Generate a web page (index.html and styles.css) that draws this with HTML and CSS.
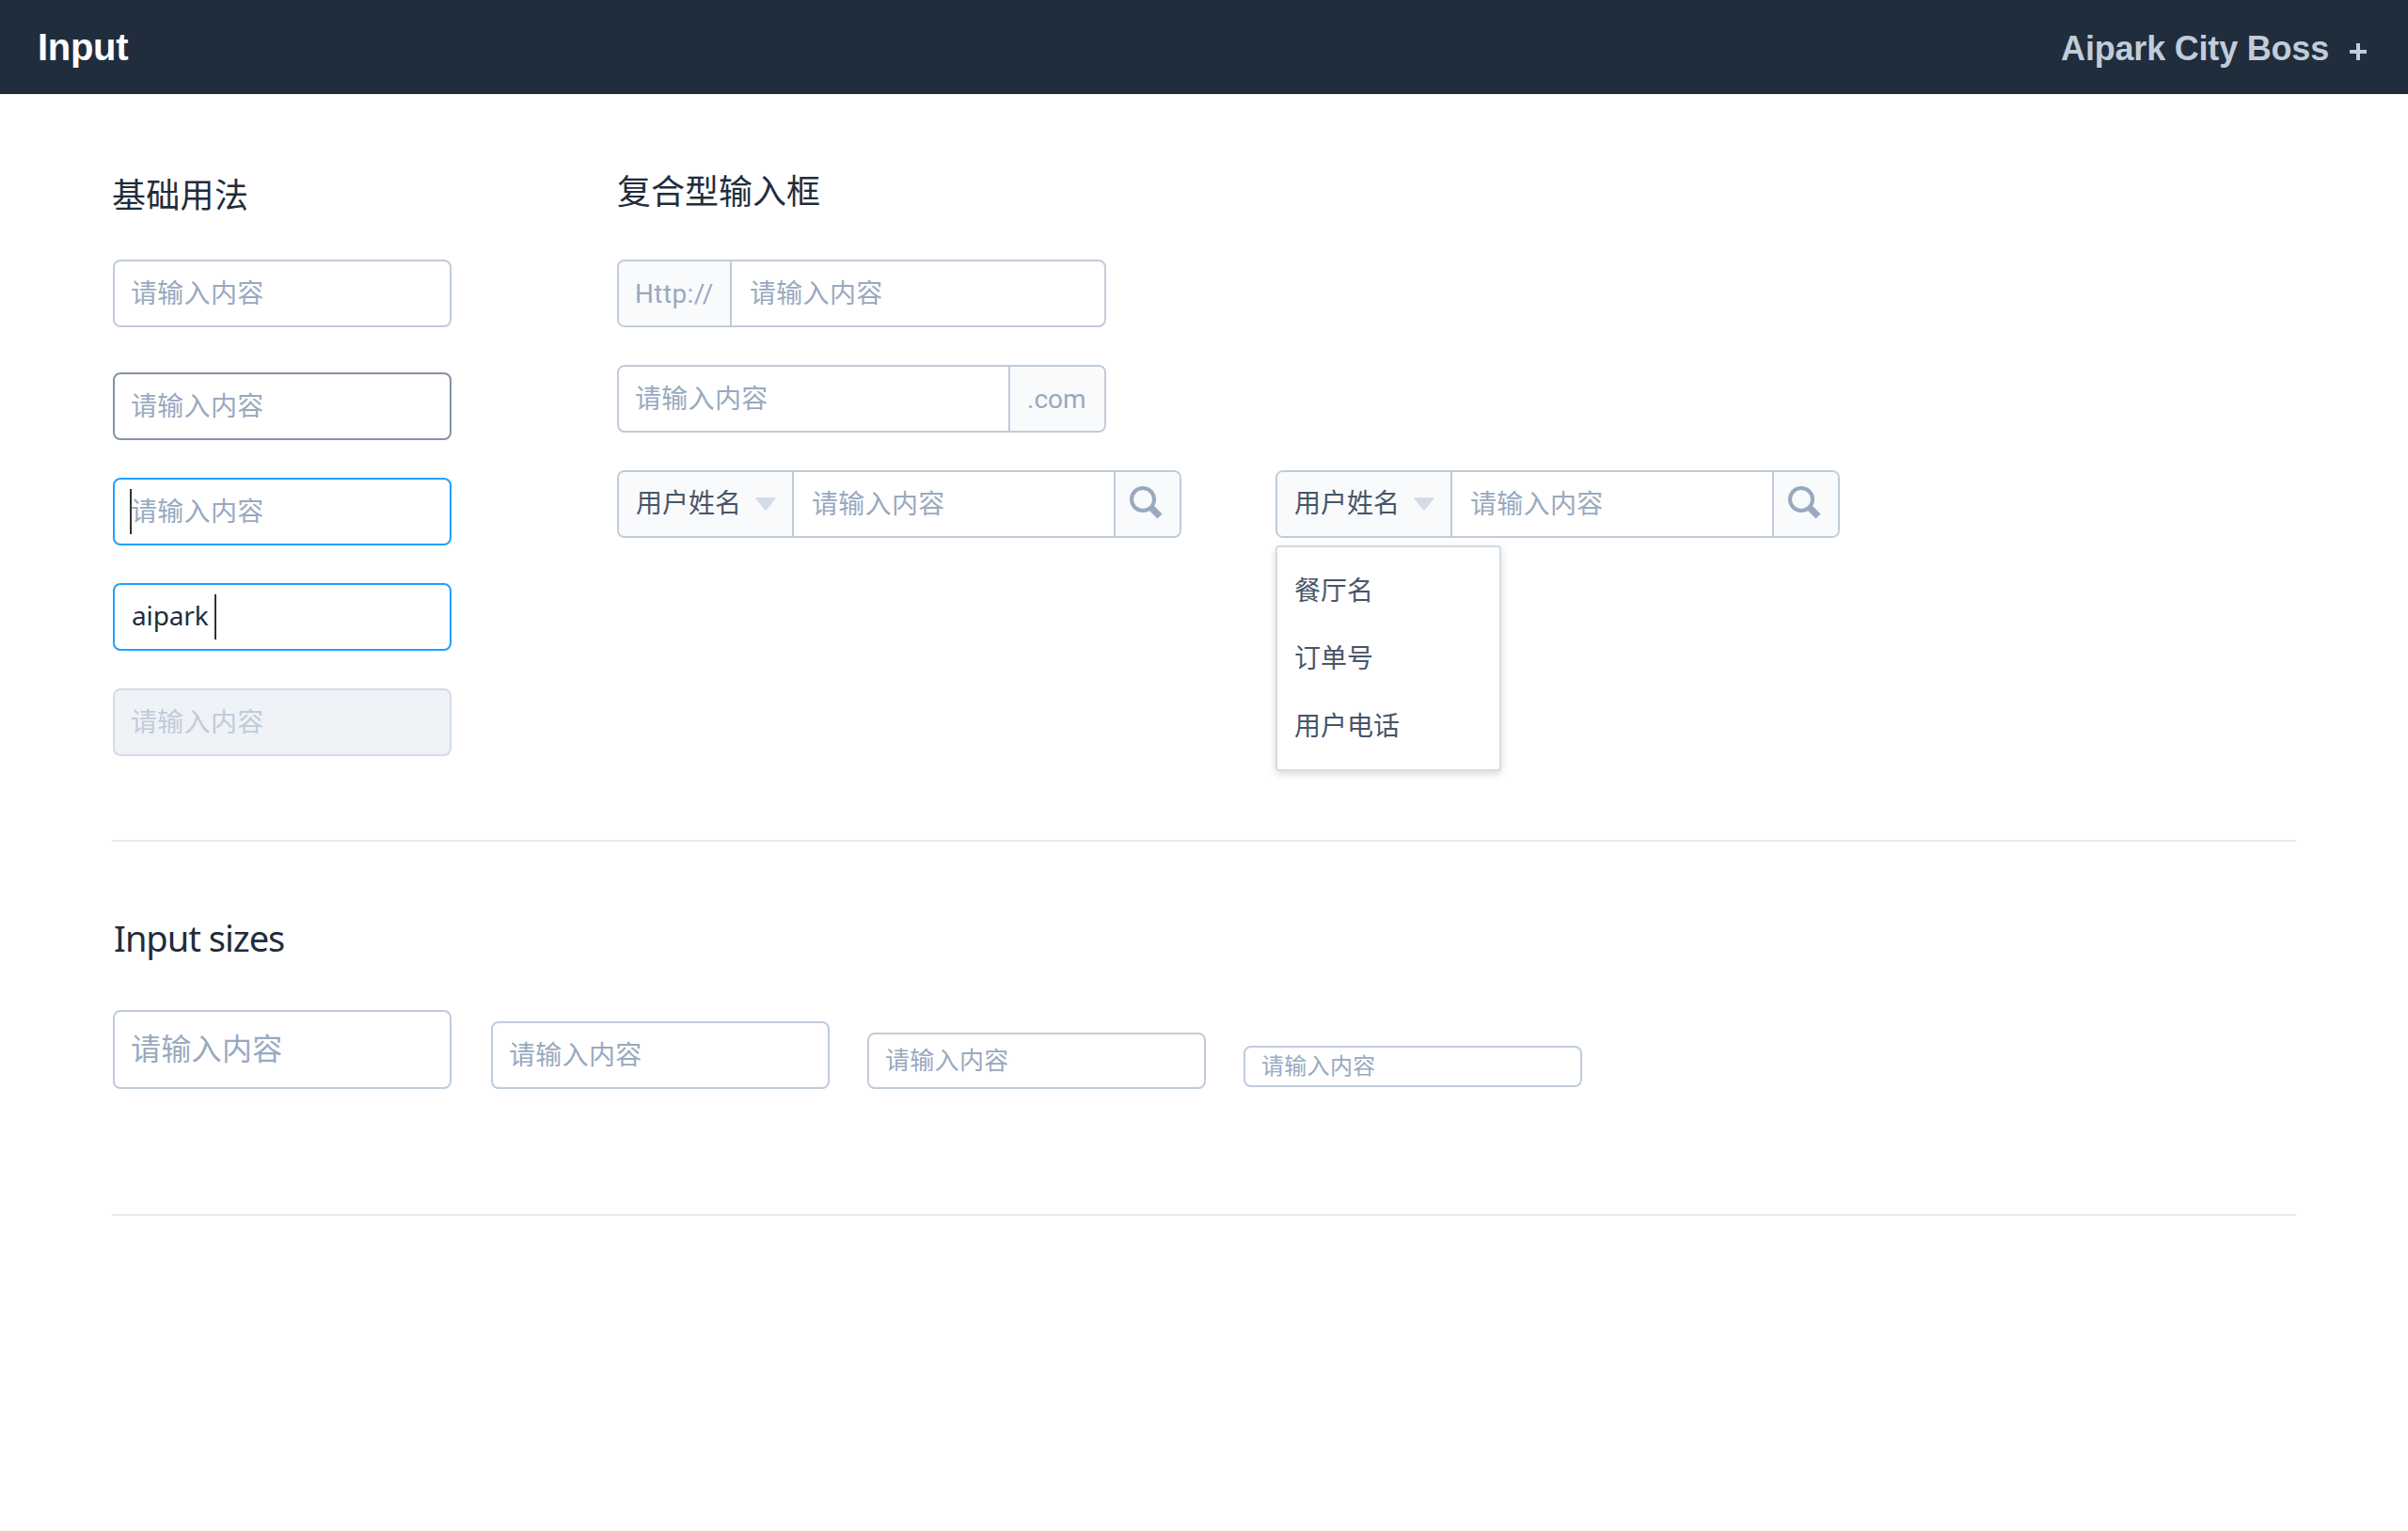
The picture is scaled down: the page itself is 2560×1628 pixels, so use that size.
FILE: index.html
```html
<!DOCTYPE html>
<html lang="zh-CN">
<head>
<meta charset="utf-8">
<title>Input</title>
<link rel="stylesheet" href="styles.css">
</head>
<body>
<header class="topbar">
  <h1 class="topbar-title">Input</h1>
  <div class="topbar-brand"><span>Aipark City Boss</span>
    <svg class="plus" viewBox="0 0 18 18"><path d="M9 0V18M0 9H18"/></svg>
  </div>
</header>
<main class="page">
  <section class="section usage">
    <div class="basic">
      <h2 class="heading">基础用法</h2>
      <div class="input first"><span>请输入内容</span></div>
      <div class="input hover"><span>请输入内容</span></div>
      <div class="input focus"><i class="caret caret-start"></i><span>请输入内容</span></div>
      <div class="input focus filled"><span>aipark</span><i class="caret"></i></div>
      <div class="input disabled"><span>请输入内容</span></div>
    </div>
    <div class="compound">
      <h2 class="heading raised">复合型输入框</h2>
      <div class="group short">
        <div class="addon prefix">Http://</div>
        <div class="field"><span>请输入内容</span></div>
      </div>
      <div class="group short">
        <div class="field flush"><span>请输入内容</span></div>
        <div class="addon suffix">.com</div>
      </div>
      <div class="searches">
        <div class="group">
          <div class="select"><span>用户姓名</span><svg class="arrow" viewBox="0 0 22 14"><path d="M1.5 0H20.5Q22.500 0.300 21 2L12.500 12.500Q11 14.500 9.500 12.500L1 2Q-0.500 0.300 1.500 0Z"/></svg></div>
          <div class="field"><span>请输入内容</span></div>
          <div class="search"><svg class="glass" viewBox="0 0 36 36"><circle cx="14" cy="14" r="12"/><path d="M22 22L32 32"/></svg></div>
        </div>
        <div class="group">
          <div class="select"><span>用户姓名</span><svg class="arrow" viewBox="0 0 22 14"><path d="M1.5 0H20.5Q22.500 0.300 21 2L12.500 12.500Q11 14.500 9.500 12.500L1 2Q-0.500 0.300 1.500 0Z"/></svg></div>
          <div class="field"><span>请输入内容</span></div>
          <div class="search"><svg class="glass" viewBox="0 0 36 36"><circle cx="14" cy="14" r="12"/><path d="M22 22L32 32"/></svg></div>
          <ul class="menu">
            <li>餐厅名</li>
            <li>订单号</li>
            <li>用户电话</li>
          </ul>
        </div>
      </div>
    </div>
  </section>
  <section class="section sizes">
    <h2 class="heading latin">Input sizes</h2>
    <div class="size-row">
      <div class="input large"><span>请输入内容</span></div>
      <div class="input medium"><span>请输入内容</span></div>
      <div class="input small"><span>请输入内容</span></div>
      <div class="input mini"><span>请输入内容</span></div>
    </div>
  </section>
</main>
</body>
</html>
```
FILE: styles.css
```css
* { box-sizing: border-box; }
body {
  margin: 0;
  background: #fff;
  color: #1f2d3d;
  font-family: "Noto Sans CJK SC", sans-serif;
  font-size: 28px;
  font-weight: 400;
}
h1, h2, ul { margin: 0; padding: 0; list-style: none; }
svg { display: block; flex: none; }

.topbar {
  display: flex;
  justify-content: space-between;
  align-items: center;
  height: 100px;
  padding: 0 44px 0 40px;
  background: #1f2d3d;
  font-family: "Liberation Sans", Arial, sans-serif;
  font-weight: 700;
}
.topbar-title { font-size: 40px; line-height: 46px; color: #fff; letter-spacing: -0.3px; }
.topbar-brand {
  display: flex;
  align-items: center;
  gap: 22px;
  font-size: 36px;
  line-height: 42px;
  letter-spacing: -0.2px;
  padding-top: 4px;
  color: #c0ccda;
}
.plus { width: 18px; height: 18px; margin-top: 6px; }
.plus path { stroke: #c0ccda; stroke-width: 4; fill: none; }

.page { margin: 0 119px; }
.section { border-bottom: 2px solid #e5e9f2; padding: 0 1px; }
.usage { display: flex; gap: 176px; height: 795px; padding-top: 79px; }
.heading { font-size: 36px; line-height: 52px; font-weight: 400; height: 52px; }
.basic .heading { text-indent: -1px; letter-spacing: 0.3px; }
.heading.raised { position: relative; top: -4px; }

.basic { width: 360px; }
.input {
  display: flex;
  align-items: center;
  width: 360px;
  height: 72px;
  margin-top: 40px;
  padding: 0 17px;
  border: 2px solid #c0ccda;
  border-radius: 8px;
  color: #99a9bf;
  line-height: 40px;
  letter-spacing: 0.3px;
}
.input span { margin-top: -4px; }
.basic .input.first { margin-top: 45px; }
.basic .input.hover { margin-top: 48px; border-color: #8492a6; }
.input.focus { border-color: #20a0ff; }
.input.filled { padding-left: 18px; color: #1f2d3d; font-family: "Noto Sans", sans-serif; letter-spacing: -0.15px; }
.input.disabled { background: #eff2f7; border-color: #d3dce6; color: #c0ccda; }
.caret { width: 2px; height: 48px; background: #333; margin-left: 7px; }
.caret-start { margin: 0 -1px 0 -1px; }

.compound { width: 1300px; }
.group {
  position: relative;
  display: flex;
  width: 600px;
  height: 72px;
  margin-top: 40px;
  border: 2px solid #c0ccda;
  border-radius: 8px;
  line-height: 64px;
}
.heading + .group { margin-top: 45px; }
.group.short { width: 520px; }
.searches { display: flex; gap: 100px; }
.addon {
  background: #f9fafc;
  color: #99a9bf;
  font-family: Roboto, sans-serif;
  line-height: 69px;
  border-radius: 6px 0 0 6px;
}
.prefix { width: 120px; padding-left: 17px; border-right: 2px solid #c0ccda; letter-spacing: 0.4px; }
.suffix { width: 102px; padding-left: 18px; border-left: 2px solid #c0ccda; border-radius: 0 6px 6px 0; }
.field { flex: 1; padding-left: 19px; color: #99a9bf; letter-spacing: 0.3px; }
.field.flush { padding-left: 17px; }
.select {
  display: flex;
  align-items: center;
  gap: 15px;
  width: 186px;
  padding-left: 18px;
  background: #f9fafc;
  border-right: 2px solid #c0ccda;
  border-radius: 6px 0 0 6px;
  color: #475669;
}
.select span { margin-top: -7px; }
.arrow { width: 22px; height: 14px; fill: #d3dce6; }
.search {
  width: 70px;
  padding: 15px 0 0 15px;
  background: #f9fafc;
  border-left: 2px solid #c0ccda;
  border-radius: 0 6px 6px 0;
}
.glass { width: 36px; height: 36px; fill: none; stroke: #99a9bf; stroke-width: 4; }
.glass path { stroke-width: 7; }
.menu {
  position: absolute;
  left: -2px;
  top: 78px;
  width: 240px;
  height: 240px;
  padding: 8px 18px;
  background: #fff;
  border: 2px solid #d3dce6;
  border-radius: 4px;
  box-shadow: 0 4px 8px rgba(0, 0, 0, 0.12), 0 0 8px rgba(0, 0, 0, 0.04);
  color: #475669;
}
.menu li { line-height: 72px; }

.sizes { height: 398px; padding-top: 76px; }
.latin { padding-left: 1px; font-family: "Noto Sans", sans-serif; font-size: 38px; letter-spacing: -1px; }
.size-row { display: flex; align-items: flex-end; gap: 40px; margin-top: 51px; }
.size-row .input { margin: 0; }
.size-row .large { height: 84px; font-size: 32px; }
.size-row .input.medium { margin-left: 2px; }
.size-row .small { height: 60px; font-size: 26px; }
.size-row .input.mini { height: 44px; font-size: 24px; margin-bottom: 2px; }
.size-row .large span { margin-top: -6px; }
```
